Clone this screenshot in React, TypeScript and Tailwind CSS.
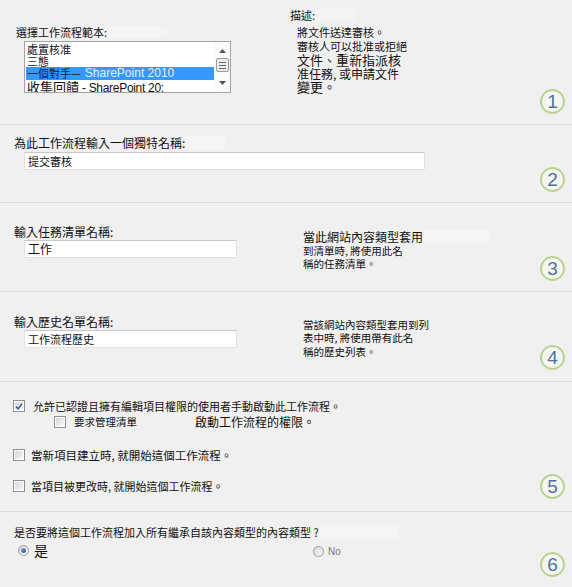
import React from 'react';

const Num = ({ n }: { n: number }) => (
  <div className="w-[25px] h-[25px] rounded-full border-2 border-[#bcd293] bg-[#f4f6f0] flex items-center justify-center text-[#4f72a0] text-[19px] leading-none font-['Liberation_Sans',sans-serif]">
    {n}
  </div>
);

const Check = ({ checked = false }: { checked?: boolean }) => (
  <div className="w-[12px] h-[12px] border border-[#8f8f8f] bg-white p-[1px] shrink-0">
    <div className="w-full h-full bg-gradient-to-br from-[#d6d6d6] to-[#f8f8f8] flex items-center justify-center">
      {checked && (
        <svg width="9" height="9" viewBox="0 0 9 9">
          <path d="M1.2 4.6 L3.5 7.2 L7.8 1.2" fill="none" stroke="#2d4f9e" strokeWidth="1.7" />
        </svg>
      )}
    </div>
  </div>
);

const Radio = ({ checked = false }: { checked?: boolean }) => (
  <div className="w-[11px] h-[11px] rounded-full border border-[#9a9a9a] bg-gradient-to-br from-[#d8d8d8] to-[#fafafa] flex items-center justify-center shrink-0">
    {checked && <div className="w-[5px] h-[5px] rounded-full bg-gradient-to-br from-[#7fb0e8] to-[#1f4f99]" />}
  </div>
);

const Badge = ({ n, pb = 'pb-[10px]' }: { n: number; pb?: string }) => (
  <div className={`flex flex-col justify-end ${pb} pr-[7px]`}>
    <Num n={n} />
  </div>
);

export default function App() {
  return (
    <div className="w-[572px] h-[587px] bg-[#f0f0f0] text-[#111] font-['Noto_Sans_CJK_TC','Noto_Sans',sans-serif] overflow-hidden">
      {/* 1 - template */}
      <div className="flex h-[125px] border-b border-[#d8d8d8]">
        <div className="w-[290px] pl-[16px] pt-[25px]">
          <div className="flex">
            <span className="text-[11px] leading-[14px]">選擇工作流程範本:</span>
            <span className="w-[60px] h-[12px] mt-[1px] bg-[#f4f4f4]" />
          </div>
          <div className="ml-[8px] mt-[2px] w-[207px] h-[52px] border border-[#a3a3a3] bg-white flex overflow-hidden">
            <div className="flex-1 pt-[1px] pl-[1px]">
              <div className="h-[12px] overflow-hidden text-[11px] leading-[12px] pl-[1px]">處置核准</div>
              <div className="h-[12px] overflow-hidden text-[11px] leading-[12px] pl-[1px]">三態</div>
              <div className="h-[13px] overflow-hidden bg-[#3399ff] text-[11px] leading-[13px] pl-[1px] whitespace-nowrap flex">
                <span className="text-[#10203a]">一個對手—</span>
                <span className="ml-[4px] text-[#e4f0ff] font-['Liberation_Sans',sans-serif] text-[12px]">SharePoint 2010</span>
              </div>
              <div className="h-[14px] overflow-hidden text-[13px] leading-[14px] pl-[1px] whitespace-nowrap">
                收集回饋 <span className="text-[12px] font-['Liberation_Sans',sans-serif] tracking-[-0.3px]">- SharePoint 20:</span>
              </div>
            </div>
            <div className="w-[16px] flex flex-col items-center bg-[#fbfbfb]">
              <svg width="7" height="4" viewBox="0 0 7 4" className="mt-[7px]"><path d="M0 4 L3.5 0 L7 4 Z" fill="#555" /></svg>
              <div className="mt-[5px] w-[13px] h-[14px] border border-[#9a9a9a] rounded-[2px] bg-[#ececec] flex flex-col items-center justify-center gap-[2px]">
                <div className="w-[7px] h-px bg-[#666]" />
                <div className="w-[7px] h-px bg-[#666]" />
                <div className="w-[7px] h-px bg-[#666]" />
              </div>
              <svg width="7" height="4" viewBox="0 0 7 4" className="mt-auto mb-[7px]"><path d="M0 0 L7 0 L3.5 4 Z" fill="#555" /></svg>
            </div>
          </div>
        </div>
        <div className="flex-1 pt-[8px]">
          <div className="flex">
            <span className="text-[11px] leading-[14px]">描述:</span>
            <span className="w-[40px] h-[12px] mt-[1px] bg-[#f4f4f4]" />
          </div>
          <div className="pl-[7px] mt-[3px] text-[11px]">
            <div className="leading-[14px]">將文件送達審核。</div>
            <div className="leading-[14px]">審核人可以批准或拒絕</div>
            <div className="leading-[14px] text-[13px]">文件、重新指派核</div>
            <div className="leading-[13px] text-[12px]">准任務, 或申請文件</div>
            <div className="leading-[14px] text-[13px]">變更。</div>
          </div>
        </div>
        <Badge n={1} />
      </div>

      {/* 2 - name */}
      <div className="flex h-[78px] border-b border-[#d8d8d8]">
        <div className="flex-1 pl-[14px] pt-[11px]">
          <div className="flex">
            <span className="text-[12px] leading-[14px]">為此工作流程輸入一個獨特名稱:</span>
            <span className="w-[40px] h-[14px] bg-[#f5f5f5]" />
          </div>
          <div className="ml-[10px] mt-[2px] w-[401px] h-[18px] bg-white border border-[#e2e2e2] border-t-[#c8c8c8] pl-[3px] text-[11px] leading-[16px]">提交審核</div>
        </div>
        <Badge n={2} />
      </div>

      {/* 3 - task list */}
      <div className="flex h-[89px] border-b border-[#d8d8d8]">
        <div className="w-[303px] pl-[14px] pt-[22px]">
          <div className="text-[12px] leading-[14px]">輸入任務清單名稱:</div>
          <div className="ml-[10px] mt-[1px] w-[213px] h-[18px] bg-white border border-[#e2e2e2] border-t-[#c8c8c8] pl-[3px] text-[12px] leading-[16px]">工作</div>
        </div>
        <div className="flex-1 pt-[27px]">
          <div className="flex">
            <span className="text-[12px] leading-[14px]">當此網站內容類型套用</span>
            <span className="ml-[1px] w-[65px] h-[13px] bg-[#f5f5f5]" />
          </div>
          <div className="text-[10.5px] leading-[13px]">到清單時, 將使用此名</div>
          <div className="text-[10.5px] leading-[13px]">稱的任務清單。</div>
        </div>
        <Badge n={3} />
      </div>

      {/* 4 - history list */}
      <div className="flex h-[90px] border-b border-[#d8d8d8]">
        <div className="w-[303px] pl-[14px] pt-[23px]">
          <div className="text-[12px] leading-[14px]">輸入歷史名單名稱:</div>
          <div className="ml-[10px] mt-[1px] w-[213px] h-[18px] bg-white border border-[#e2e2e2] border-t-[#c8c8c8] pl-[3px] text-[11px] leading-[16px]">工作流程歷史</div>
        </div>
        <div className="flex-1 pt-[26px] text-[10.5px]">
          <div className="leading-[13px]">當該網站內容類型套用到列</div>
          <div className="leading-[14px]">表中時, 將使用帶有此名</div>
          <div className="leading-[13px]">稱的歷史列表。</div>
        </div>
        <Badge n={4} pb="pb-[11px]" />
      </div>

      {/* 5 - start options */}
      <div className="flex h-[130px] border-b border-[#d8d8d8]">
        <div className="flex-1 pl-[13px] pt-[17px]">
          <div className="flex items-center h-[14px]">
            <Check checked />
            <span className="ml-[8px] text-[11px] leading-[14px] whitespace-nowrap">允許已認證且擁有編輯項目權限的使用者手動啟動此工作流程。</span>
          </div>
          <div className="flex items-center h-[16px] mt-[1px] pl-[41px]">
            <Check />
            <span className="ml-[8px] text-[10.5px] leading-[14px] whitespace-nowrap w-[121px]">要求管理清單</span>
            <span className="text-[12px] leading-[16px] whitespace-nowrap">啟動工作流程的權限。</span>
          </div>
          <div className="flex items-center h-[16px] mt-[17px]">
            <Check />
            <span className="ml-[6px] text-[11.5px] leading-[16px] whitespace-nowrap">當新項目建立時, 就開始這個工作流程。</span>
          </div>
          <div className="flex items-center h-[14px] mt-[16px]">
            <Check />
            <span className="ml-[6px] text-[11px] leading-[14px] whitespace-nowrap">當項目被更改時, 就開始這個工作流程。</span>
          </div>
        </div>
        <Badge n={5} pb="pb-[12px]" />
      </div>

      {/* 6 - add to child content types */}
      <div className="flex h-[75px]">
        <div className="flex-1 pl-[14px] pt-[13px]">
          <div className="flex">
            <span className="text-[11px] leading-[14px] whitespace-nowrap">是否要將這個工作流程加入所有繼承自該內容類型的內容類型 ?</span>
            <span className="w-[80px] h-[14px] bg-[#f5f5f5]" />
          </div>
          <div className="flex items-center h-[18px] mt-[2px]">
            <div className="ml-[4px]"><Radio checked /></div>
            <span className="ml-[5px] text-[14px] leading-[18px]">是</span>
            <div className="ml-[265px] mt-[3px]"><Radio /></div>
            <span className="ml-[4px] mt-[3px] text-[10px] text-[#777] font-['Liberation_Sans',sans-serif]">No</span>
          </div>
        </div>
        <Badge n={6} />
      </div>
    </div>
  );
}
